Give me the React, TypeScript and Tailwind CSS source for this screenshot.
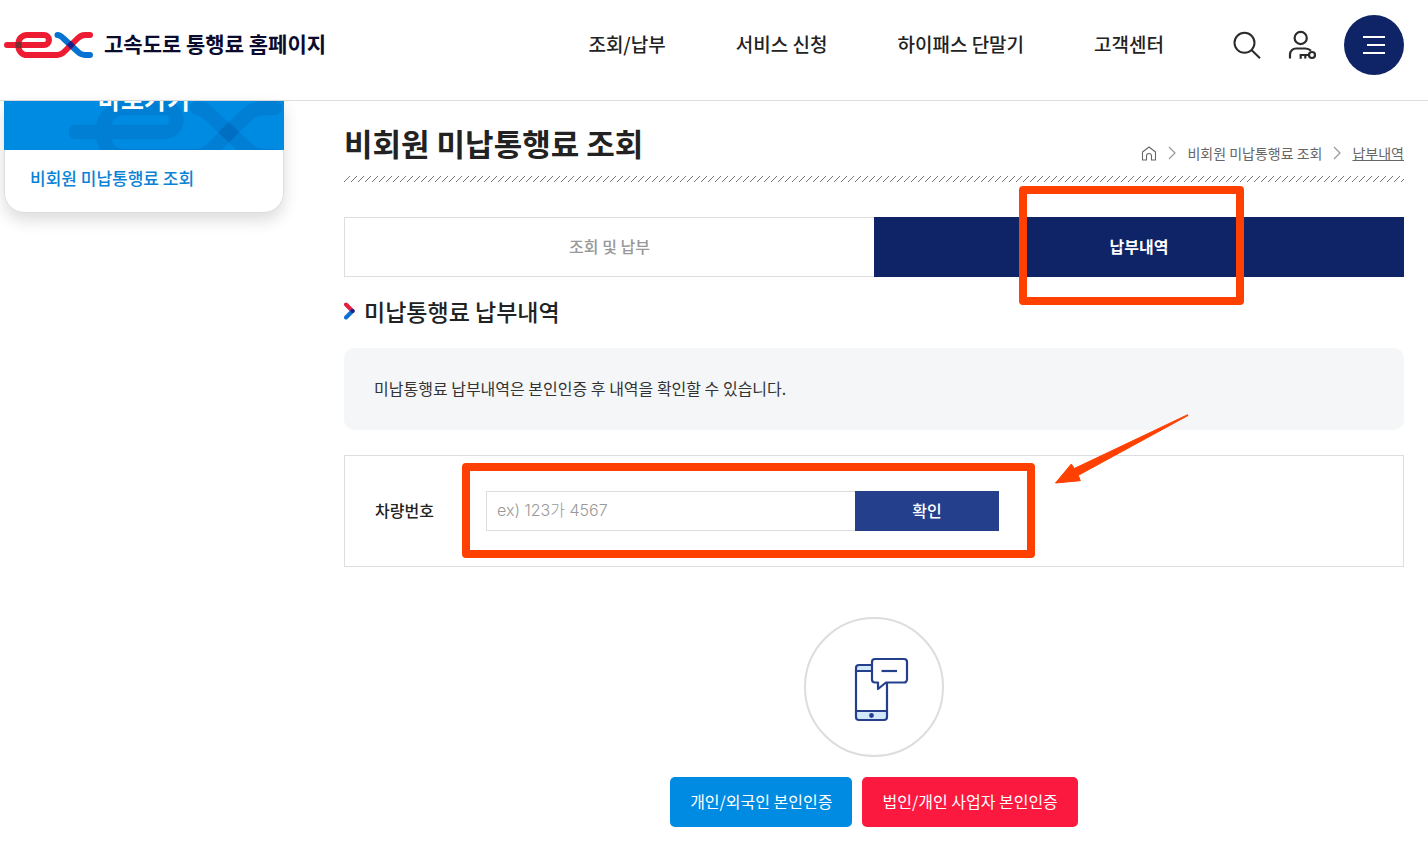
import type { ReactNode } from "react";

const navItems = ["조회/납부", "서비스 신청", "하이패스 단말기", "고객센터"];

const RED_PATH =
  "M7 45 H44 a5 5 0 0 0 0 -10 H27 a8.5 8.5 0 0 0 -8.5 8.5 V46.5 a8.5 8.5 0 0 0 8.5 8.5 H57 c3.5 0 5.5 -1.5 7.5 -3.5 L77.5 38.5 c2 -2 4 -3.5 7.5 -3.5 H90";
const BLUE_PATH = "M57.5 35 c2.5 0 4 1.5 5.5 3 L77.5 51.5 c2 2 4 3.5 7.5 3.5 H90";

function Logo() {
  return (
    <svg viewBox="4 31 90 28" className="h-7 w-[90px]" fill="none" strokeWidth="6" strokeLinecap="round" aria-hidden="true">
      <path d={BLUE_PATH} stroke="#0573d1" />
      <path d={RED_PATH} stroke="#ee1c33" />
      <path d="M70.8 40.8 l4.2 4.2 -4.2 4.2 -4.2 -4.2z" fill="#1b1f87" />
      <rect x="15.5" y="42" width="6" height="6" fill="#7c2b2f" />
    </svg>
  );
}

function Watermark() {
  return (
    <svg viewBox="0 0 280 49" className="absolute bottom-0 left-0 h-[49px] w-[280px]" fill="none" strokeWidth="6" strokeLinecap="round" aria-hidden="true">
      <g transform="translate(55 -77) scale(2.4)" stroke="#004a9a" strokeOpacity="0.18">
        <path d={RED_PATH} />
        <path d={BLUE_PATH} />
        <path d="M70.8 40.6 l4.4 4.4 -4.4 4.4 -4.4 -4.4z" fill="#004a9a" fillOpacity="0.15" stroke="none" />
      </g>
    </svg>
  );
}

function SearchIcon() {
  return (
    <svg viewBox="0 0 30 30" className="size-[30px]" fill="none" stroke="#2b2b2b" strokeWidth="2" aria-hidden="true">
      <circle cx="12.5" cy="12.8" r="10" />
      <path d="M19.5 20 L28 28.2" />
    </svg>
  );
}

function UserKeyIcon() {
  return (
    <svg viewBox="0 0 30 30" className="size-[30px]" fill="none" stroke="#2b2b2b" strokeWidth="2.2" aria-hidden="true">
      <circle cx="12.7" cy="8" r="6.1" />
      <path d="M2 28.5 V24.5 a6 6 0 0 1 6 -6 H17.5 c2.3 0 4 0.8 5.5 2.3" />
      <circle cx="24" cy="25" r="3" />
      <path d="M21 25 H12.7 V28.8 M17.3 25 V28.4" />
    </svg>
  );
}

function HomeIcon() {
  return (
    <svg viewBox="0 0 16 16" className="size-4" fill="none" stroke="#666" strokeWidth="1.1" strokeLinejoin="round" aria-hidden="true">
      <path d="M1.5 7 L8 2 L14.5 7 V15 H10.5 V11 a2.5 2.5 0 0 0 -5 0 V15 H1.5z" />
    </svg>
  );
}

function Chevron() {
  return (
    <svg viewBox="0 0 8 14" className="h-3.5 w-2" fill="none" stroke="#999" strokeWidth="1.2" aria-hidden="true">
      <path d="M1 1 L7 7 L1 13" />
    </svg>
  );
}

function Hatch() {
  return (
    <svg className="block h-1.5 w-full" aria-hidden="true">
      <defs>
        <pattern id="hatch" width="7" height="6" patternUnits="userSpaceOnUse">
          <path d="M0 6 L6 0" stroke="#777" strokeWidth="1" />
        </pattern>
      </defs>
      <rect width="100%" height="6" fill="url(#hatch)" />
    </svg>
  );
}

function PhoneIcon() {
  return (
    <svg viewBox="0 0 56 66" className="ml-4 mt-1.5 h-[66px] w-14" fill="none" stroke="#243f8c" strokeWidth="2.2" strokeLinejoin="round" aria-hidden="true">
      <path d="M2 14 V11 a3 3 0 0 1 3 -3 H19 V14z" fill="#d3e9fb" />
      <path d="M2 54 H33 V60 a3 3 0 0 1 -3 3 H5 a3 3 0 0 1 -3 -3z" fill="#d3e9fb" />
      <path d="M2 14 V54 M33 26 V54" />
      <circle cx="17.5" cy="58.5" r="1.3" fill="#243f8c" />
      <path d="M21 2 H50 a3 3 0 0 1 3 3 V22.5 a3 3 0 0 1 -3 3 H32 L24 32 V25.5 H21 a3 3 0 0 1 -3 -3 V5 a3 3 0 0 1 3 -3z" fill="#fff" />
      <path d="M27.5 14 H43" />
    </svg>
  );
}

function AuthButton({ color, children }: { color: string; children: ReactNode }) {
  return (
    <button type="button" className={`h-[50px] rounded-[5px] px-5 pb-0.5 text-base text-white ${color}`}>
      {children}
    </button>
  );
}

export default function App() {
  return (
    <div className="min-h-screen bg-white pb-9 font-['Noto_Sans_CJK_KR',sans-serif] text-[#222]">
      <header className="flex h-[101px] items-start justify-between border-b border-[#ddd] pt-[15px] pr-6 pl-1">
        <a href="#" className="flex h-[60px] items-center gap-2.5 text-[21px] font-bold text-[#0b0b2e]">
          <Logo />
          <span className="pb-0.5">고속도로 통행료 홈페이지</span>
        </a>
        <div className="flex h-[60px] items-center">
          <nav className="flex gap-[70px] pb-0.5 text-[19px] font-medium">
            {navItems.map((item) => (
              <a key={item} href="#">
                {item}
              </a>
            ))}
          </nav>
          <div className="ml-[68px] flex items-center gap-[26px]">
            <button type="button" aria-label="검색">
              <SearchIcon />
            </button>
            <button type="button" aria-label="로그인">
              <UserKeyIcon />
            </button>
            <button type="button" aria-label="전체메뉴" className="flex size-[60px] items-center justify-center rounded-full bg-[#0f2466]">
              <svg viewBox="0 0 22 18" className="h-[18px] w-[22px]" stroke="#fff" strokeWidth="2" aria-hidden="true">
                <path d="M0 1 H22 M4 9 H22 M0 17 H22" />
              </svg>
            </button>
          </div>
        </div>
      </header>

      <div className="flex items-start gap-[60px] pr-6 pl-1">
        <aside className="w-[280px] shrink-0 rounded-b-[20px] shadow-[0_7px_16px_rgba(0,0,0,0.14)]">
          <div className="relative flex h-[49px] items-end justify-center overflow-hidden bg-[#008be2] pb-9">
            <Watermark />
            <strong className="relative text-[25px] leading-8 font-bold text-white">바로가기</strong>
          </div>
          <div className="rounded-b-[20px] border border-t-0 border-[#ddd] bg-white px-[25px] pt-[15px] pb-[21px]">
            <a href="#" className="block text-[17px] leading-[26px] font-medium text-[#0a82d6]">
              비회원 미납통행료 조회
            </a>
          </div>
        </aside>

        <main className="min-w-0 flex-1">
          <div className="flex items-end justify-between pt-[19px] pb-[11px]">
            <h1 className="text-[31px] leading-[45px] font-bold">비회원 미납통행료 조회</h1>
            <nav aria-label="현재 위치" className="flex items-center gap-[11px] text-sm leading-6 text-[#666]">
              <a href="#" aria-label="홈">
                <HomeIcon />
              </a>
              <Chevron />
              <a href="#">비회원 미납통행료 조회</a>
              <Chevron />
              <a href="#" className="underline">
                납부내역
              </a>
            </nav>
          </div>
          <Hatch />

          <div className="mt-[35px] grid h-[60px] grid-cols-2">
            <button type="button" className="border border-r-0 border-[#ddd] pb-0.5 text-base font-medium text-[#999]">
              조회 및 납부
            </button>
            <div className="relative flex">
              <button type="button" className="flex-1 bg-[#0f2466] pb-0.5 text-base font-bold text-white">
                납부내역
              </button>
              <span className="pointer-events-none absolute -top-[31px] right-40 h-[119px] w-[225px] rounded border-8 border-[#ff4000]" />
            </div>
          </div>

          <h2 className="mt-4 flex items-center gap-[9px] text-[23px] leading-9 font-medium">
            <svg viewBox="0 0 11 18" className="h-[18px] w-[11px]" fill="none" strokeWidth="4" strokeLinecap="round" aria-hidden="true">
              <path d="M2 2.5 L8.5 9" stroke="#e21f3f" />
              <path d="M8.5 9 L2 15.5" stroke="#0f6fd0" />
              <path d="M8.5 9 h0.1" stroke="#1b1f87" />
            </svg>
            미납통행료 납부내역
          </h2>

          <p className="mt-[19px] rounded-[10px] bg-[#f4f6f8] px-[30px] pt-7 pb-[30px] text-base leading-6 text-[#333]">
            미납통행료 납부내역은 본인인증 후 내역을 확인할 수 있습니다.
          </p>

          <form className="relative mt-[25px] flex items-center border border-[#ddd] px-[30px] py-[35px]" onSubmit={(e) => e.preventDefault()}>
            <label htmlFor="car-number" className="w-[111px] pb-0.5 text-base font-medium">
              차량번호
            </label>
            <div className="relative flex">
              <input
                id="car-number"
                type="text"
                placeholder="ex) 123가 4567"
                className="h-10 w-[369px] border border-r-0 border-[#ddd] bg-white px-2.5 pb-0.5 font-['Inter','Noto_Sans_CJK_KR',sans-serif] text-base font-light placeholder:text-[#999]"
              />
              <button type="submit" className="h-10 w-36 bg-[#243f8c] pb-0.5 text-base font-medium text-white">
                확인
              </button>
              <span className="pointer-events-none absolute -top-7 -right-9 -bottom-[27px] -left-6 rounded border-8 border-[#ff4000]" />
              <svg viewBox="1050 410 145 80" className="pointer-events-none absolute -top-[81px] left-[564px] h-20 w-[145px]" aria-hidden="true">
                <path
                  d="M1055.5 483 L1071.3 464 L1074.3 468.5 L1187.7 414.7 L1188 415.5 L1078.3 475.3 L1080.3 480.7z"
                  fill="#ff4000"
                  stroke="#ff4000"
                  strokeLinejoin="round"
                />
              </svg>
            </div>
          </form>

          <section className="mt-[50px] flex flex-col items-center gap-5">
            <div className="flex size-[140px] items-center justify-center rounded-full border-2 border-[#ddd]">
              <PhoneIcon />
            </div>
            <div className="flex gap-2.5">
              <AuthButton color="bg-[#008be2]">개인/외국인 본인인증</AuthButton>
              <AuthButton color="bg-[#fc193f]">법인/개인 사업자 본인인증</AuthButton>
            </div>
          </section>
        </main>
      </div>
    </div>
  );
}
